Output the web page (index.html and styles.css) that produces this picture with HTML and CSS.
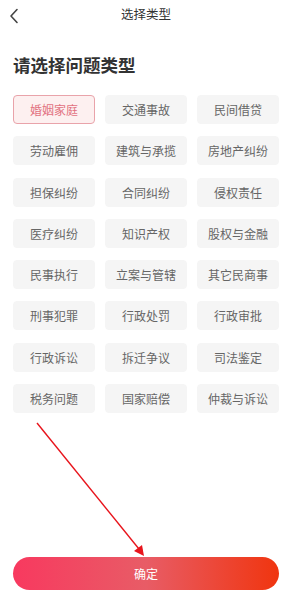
FILE: index.html
```html
<!DOCTYPE html>
<html lang="zh-CN">
<head>
  <meta charset="UTF-8" />
  <meta name="viewport" content="width=device-width, initial-scale=1.0" />
  <title>选择类型</title>
  <link rel="stylesheet" href="styles.css">
</head>
<body>
  <div class="page">
    <div class="header">
      <span class="back">
        <svg width="10" height="16" viewBox="0 0 10 16"><path d="M8 1.5 L2 8 L8 14.5" fill="none" stroke="#444" stroke-width="1.6" stroke-linecap="round" stroke-linejoin="round"/></svg>
      </span>
      <div class="title">选择类型</div>
    </div>

    <h1 class="heading">请选择问题类型</h1>

    <div class="types">
      <button class="type active">婚姻家庭</button>
      <button class="type">交通事故</button>
      <button class="type">民间借贷</button>
      <button class="type">劳动雇佣</button>
      <button class="type">建筑与承揽</button>
      <button class="type">房地产纠纷</button>
      <button class="type">担保纠纷</button>
      <button class="type">合同纠纷</button>
      <button class="type">侵权责任</button>
      <button class="type">医疗纠纷</button>
      <button class="type">知识产权</button>
      <button class="type">股权与金融</button>
      <button class="type">民事执行</button>
      <button class="type">立案与管辖</button>
      <button class="type">其它民商事</button>
      <button class="type">刑事犯罪</button>
      <button class="type">行政处罚</button>
      <button class="type">行政审批</button>
      <button class="type">行政诉讼</button>
      <button class="type">拆迁争议</button>
      <button class="type">司法鉴定</button>
      <button class="type">税务问题</button>
      <button class="type">国家赔偿</button>
      <button class="type">仲裁与诉讼</button>
    </div>

    <button class="confirm">确定</button>

    <!-- 标注箭头 -->
    <svg class="arrow" width="298" height="600" viewBox="0 0 298 600">
      <line x1="37" y1="423" x2="139" y2="549" stroke="#e8141c" stroke-width="1.4"/>
      <polygon points="144,556 134,551 142,545" fill="#e8141c"/>
    </svg>
  </div>

  <script>
    const types = document.querySelector(".types");
    types.addEventListener("click", (e) => {
      const btn = e.target;
      if (btn.tagName !== "BUTTON") return;
      types.querySelectorAll(".type").forEach((b) => b.classList.remove("active"));
      btn.classList.add("active");
    });
  </script>
</body>
</html>
```

FILE: styles.css
```css
body {
  margin: 0;
  font-family: "Noto Sans CJK SC", "Noto Sans", sans-serif;
  background: #fff;
}

.page {
  position: relative;
  min-height: 100vh;
  display: flex;
  flex-direction: column;
  padding: 0 19px 0 13px;
  box-sizing: border-box;
}

.header {
  height: 27px;
  display: flex;
  align-items: center;
  justify-content: center;
  position: relative;
}

.back {
  position: absolute;
  left: -4px;
  top: 5px;
}

.title {
  font-size: 12.5px;
  color: #333;
}

.heading {
  margin: 26px 0 18px;
  font-size: 17.5px;
  line-height: 24px;
  font-weight: bold;
  color: #333;
}

.types {
  display: grid;
  grid-template-columns: repeat(3, 82px);
  column-gap: 10px;
  row-gap: 12.3px;
}

.type {
  height: 29px;
  padding: 0;
  border: 1px solid #f5f5f5;
  border-radius: 4px;
  background: #f5f5f5;
  color: #666;
  font-family: inherit;
  font-size: 12px;
  cursor: pointer;
}

.type.active {
  background: #fdf0f0;
  border-color: #e9a3aa;
  color: #e2707f;
}

.confirm {
  margin: auto 0 10px;
  height: 33px;
  border: none;
  border-radius: 17px;
  background: linear-gradient(90deg, #f8395f 0%, #e85c66 50%, #f0350f 100%);
  color: #fff;
  font-family: inherit;
  font-size: 12px;
  cursor: pointer;
}

.arrow {
  position: absolute;
  left: 0;
  top: 0;
  pointer-events: none;
}
```
